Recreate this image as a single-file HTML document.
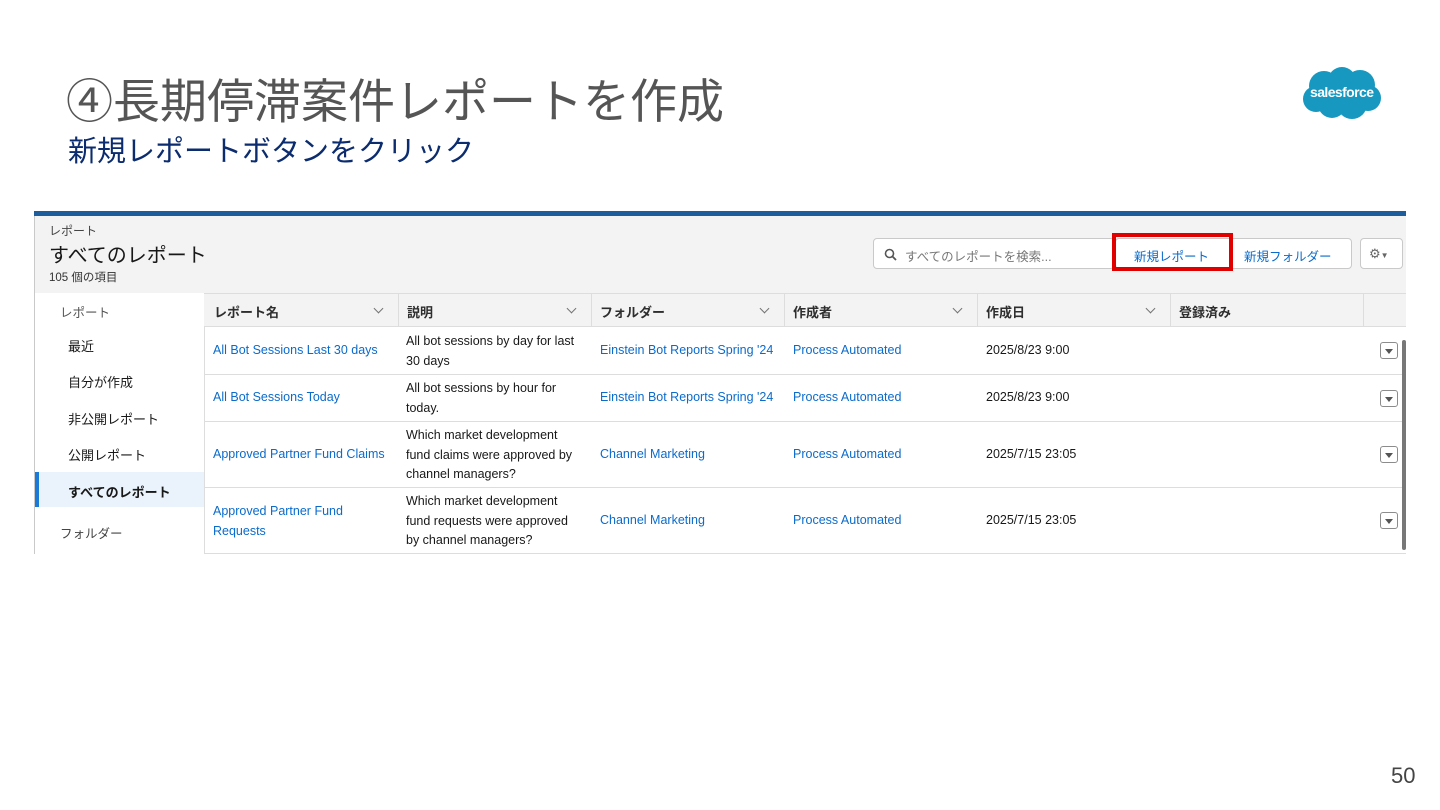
<!DOCTYPE html>
<html><head><meta charset="utf-8"><style>
*{margin:0;padding:0;box-sizing:border-box}
body{width:1440px;height:810px;background:#fff;position:relative;overflow:hidden;font-family:"Liberation Sans","Noto Sans CJK JP",sans-serif}
.a{position:absolute;white-space:nowrap}
.t{font-size:13px;color:#181818}
.l{font-size:12.5px;color:#0b6bcb}
.d{font-size:12.5px;color:#181818;line-height:19.5px;white-space:normal}
.hd{font-size:13px;font-weight:bold;color:#2e2e2e}
.chev{position:absolute;width:7px;height:7px;border-right:1.3px solid #747474;border-bottom:1.3px solid #747474;transform:rotate(45deg)}
.vl{position:absolute;top:293px;height:33px;width:1px;background:#ddd}
.hl{position:absolute;left:204px;width:1202px;height:1px;background:#ddd}
.dd{position:absolute;left:1380px;width:18px;height:17px;border:1px solid #8c8c8c;border-radius:3px;background:#fff}
.dd:after{content:"";position:absolute;left:4px;top:6px;border-left:4px solid transparent;border-right:4px solid transparent;border-top:5px solid #555}
</style></head><body>
<div class="a" style="left:66px;top:63px;font-size:47px;color:#555;font-family:'Noto Sans CJK JP',sans-serif">④長期停滞案件レポートを作成</div>
<div class="a" style="left:68px;top:128px;font-size:29px;color:#0b2c6e;font-family:'Noto Sans CJK JP',sans-serif">新規レポートボタンをクリック</div>
<svg class="a" style="left:1302px;top:66px" width="80" height="55" viewBox="0 0 80 55"><g fill="#1798c1"><circle cx="22" cy="20" r="15"/><circle cx="40" cy="15" r="14"/><circle cx="58" cy="19" r="15"/><circle cx="66" cy="32" r="13"/><circle cx="14" cy="33" r="13"/><circle cx="30" cy="38" r="14"/><circle cx="50" cy="38" r="15"/></g><text x="40" y="31" font-size="14" font-weight="bold" fill="#fff" text-anchor="middle" font-family="Liberation Sans" textLength="64">salesforce</text></svg>
<div class="a" style="left:1391px;top:763px;font-size:22px;color:#444">50</div>

<div class="a" style="left:34px;top:211px;width:1372px;height:5px;background:#1d5d9c"></div>
<div class="a" style="left:34px;top:216px;width:1372px;height:77px;background:#f3f3f3"></div>
<div class="a" style="left:34px;top:216px;width:1px;height:338px;background:#c9c9c9"></div>
<div class="a" style="left:49px;top:222px;font-size:12px;color:#444">レポート</div>
<div class="a" style="left:49px;top:239px;font-size:20px;color:#181818">すべてのレポート</div>
<div class="a" style="left:49px;top:269px;font-size:11.5px;color:#333">105 個の項目</div>
<div class="a" style="left:873px;top:238px;width:242px;height:31px;border:1px solid #c9c9c9;border-radius:4px;background:#fff"></div>
<svg class="a" style="left:884px;top:248px" width="13" height="13" viewBox="0 0 13 13"><circle cx="5.5" cy="5.5" r="4" fill="none" stroke="#555" stroke-width="1.6"/><path d="M8.5 8.5L12 12" stroke="#555" stroke-width="1.8"/></svg>
<div class="a" style="left:905px;top:246px;font-size:12.5px;color:#777">すべてのレポートを検索...</div>
<div class="a" style="left:1115px;top:238px;width:237px;height:31px;border:1px solid #c9c9c9;border-radius:4px;background:#fff"></div>
<div class="a" style="left:1231px;top:238px;width:1px;height:31px;background:#c9c9c9"></div>
<div class="a" style="left:1134px;top:246px;font-size:12.5px;color:#0b6bcb">新規レポート</div>
<div class="a" style="left:1244px;top:246px;font-size:12.5px;color:#0b6bcb">新規フォルダー</div>
<div class="a" style="left:1112px;top:233px;width:121px;height:38px;border:4px solid #e00000"></div>
<div class="a" style="left:1360px;top:238px;width:43px;height:31px;border:1px solid #c9c9c9;border-radius:4px;background:#fff"></div>
<div class="a" style="left:1369px;top:246px;font-size:13px;color:#666">⚙<span style="font-size:8px">▼</span></div>

<div class="a" style="left:35px;top:293px;width:169px;height:261px;background:#fff"></div>
<div class="a" style="left:60px;top:302px;font-size:12.5px;color:#555">レポート</div>
<div class="a t" style="left:68px;top:336px">最近</div>
<div class="a t" style="left:68px;top:372px">自分が作成</div>
<div class="a t" style="left:68px;top:409px">非公開レポート</div>
<div class="a t" style="left:68px;top:445px">公開レポート</div>
<div class="a" style="left:35px;top:472px;width:169px;height:35px;background:#eaf3fc"></div>
<div class="a" style="left:35px;top:472px;width:4px;height:35px;background:#1b7ad6"></div>
<div class="a t" style="left:68px;top:482px;font-weight:bold">すべてのレポート</div>
<div class="a" style="left:60px;top:523px;font-size:12.5px;color:#444">フォルダー</div>

<div class="a" style="left:204px;top:293px;width:1202px;height:261px;background:#fff;border-left:1px solid #ddd"></div>
<div class="a" style="left:204px;top:293px;width:1202px;height:33px;background:#f3f3f3"></div>
<div class="hl" style="top:293px"></div><div class="hl" style="top:326px"></div><div class="hl" style="top:374px"></div><div class="hl" style="top:421px"></div><div class="hl" style="top:487px"></div><div class="hl" style="top:553px"></div>
<div class="vl" style="left:398px"></div><div class="vl" style="left:591px"></div><div class="vl" style="left:784px"></div><div class="vl" style="left:977px"></div><div class="vl" style="left:1170px"></div><div class="vl" style="left:1363px"></div>
<div class="a hd" style="left:214px;top:302px">レポート名</div><div class="chev" style="left:375px;top:305px"></div>
<div class="a hd" style="left:407px;top:302px">説明</div><div class="chev" style="left:568px;top:305px"></div>
<div class="a hd" style="left:600px;top:302px">フォルダー</div><div class="chev" style="left:761px;top:305px"></div>
<div class="a hd" style="left:793px;top:302px">作成者</div><div class="chev" style="left:954px;top:305px"></div>
<div class="a hd" style="left:986px;top:302px">作成日</div><div class="chev" style="left:1147px;top:305px"></div>
<div class="a hd" style="left:1179px;top:302px">登録済み</div>

<div class="a l" style="left:213px;top:343px">All Bot Sessions Last 30 days</div>
<div class="a d" style="left:406px;top:332px;width:175px">All bot sessions by day for last 30 days</div>
<div class="a l" style="left:600px;top:343px">Einstein Bot Reports Spring '24</div>
<div class="a l" style="left:793px;top:343px">Process Automated</div>
<div class="a t" style="left:986px;top:343px;font-size:12.5px">2025/8/23 9:00</div>
<div class="dd" style="top:342px"></div>

<div class="a l" style="left:213px;top:390px">All Bot Sessions Today</div>
<div class="a d" style="left:406px;top:379px;width:175px">All bot sessions by hour for today.</div>
<div class="a l" style="left:600px;top:390px">Einstein Bot Reports Spring '24</div>
<div class="a l" style="left:793px;top:390px">Process Automated</div>
<div class="a t" style="left:986px;top:390px;font-size:12.5px">2025/8/23 9:00</div>
<div class="dd" style="top:390px"></div>

<div class="a l" style="left:213px;top:447px">Approved Partner Fund Claims</div>
<div class="a d" style="left:406px;top:426px;width:175px">Which market development fund claims were approved by channel managers?</div>
<div class="a l" style="left:600px;top:447px">Channel Marketing</div>
<div class="a l" style="left:793px;top:447px">Process Automated</div>
<div class="a t" style="left:986px;top:447px;font-size:12.5px">2025/7/15 23:05</div>
<div class="dd" style="top:446px"></div>

<div class="a d" style="left:213px;top:502px;width:170px;color:#0b6bcb">Approved Partner Fund Requests</div>
<div class="a d" style="left:406px;top:492px;width:175px">Which market development fund requests were approved by channel managers?</div>
<div class="a l" style="left:600px;top:513px">Channel Marketing</div>
<div class="a l" style="left:793px;top:513px">Process Automated</div>
<div class="a t" style="left:986px;top:513px;font-size:12.5px">2025/7/15 23:05</div>
<div class="dd" style="top:512px"></div>
<div class="a" style="left:1402px;top:340px;width:4px;height:210px;background:#777;border-radius:2px"></div>
</body></html>
